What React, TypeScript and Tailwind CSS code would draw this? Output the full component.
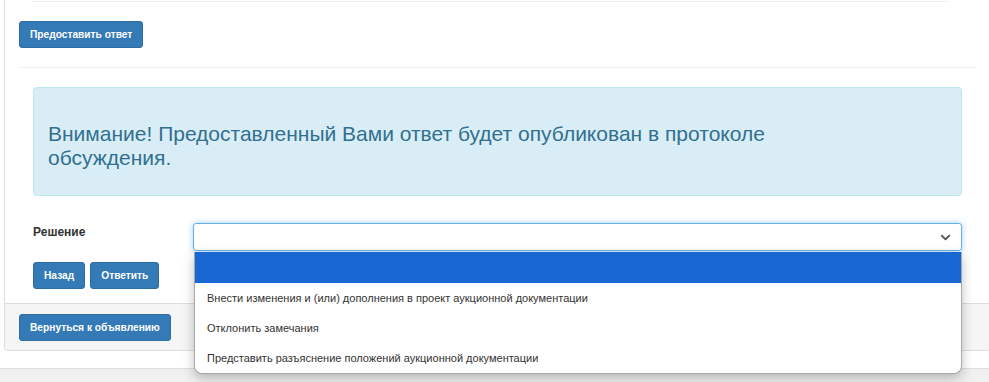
import { ChevronDown } from "lucide-react";

const options = [
  "Внести изменения и (или) дополнения в проект аукционной документации",
  "Отклонить замечания",
  "Представить разъяснение положений аукционной документации",
];

const btn =
  "rounded-[3px] border border-[#2e6da4] bg-[#337ab7] px-[10px] text-[10.2px] font-bold leading-[25px] text-white";

export default function App() {
  return (
    <div className="relative h-[382px] w-[989px] overflow-hidden bg-white font-['Liberation_Sans',Arial,sans-serif] text-[#333]">
      <div className="ml-[4px] w-[987px] rounded-b-[4px] border-x border-b border-[#ddd] bg-white">
        <div className="px-[14px]">
          <div className="mx-[14px] mr-[27px] border-b border-[#eee] pt-px" />
          <div className="pt-[19px]">
            <button className={btn}>Предоставить ответ</button>
          </div>
          <div className="mt-[19px] border-t border-[#eee]" />

          <div className="px-[14px] pt-[19px]">
            <div className="rounded-[4px] border border-[#bce8f1] bg-[#d9edf7] px-[14px] pb-[25px] pt-[34px] text-[#31708f]">
              <h3 className="max-w-[820px] text-[21px] leading-[24px]">
                Внимание! Предоставленный Вами ответ будет опубликован в протоколе обсуждения.
              </h3>
            </div>

            <div className="mt-[27px] flex items-start">
              <label className="w-[160px] pt-[2px] text-[12px] font-bold leading-[14px]">Решение</label>
              <div className="relative flex h-[28px] flex-1 items-center justify-end rounded-[3px] border border-[#66afe9] bg-white pr-[8px] shadow-[0_0_6px_rgba(102,175,233,0.6)]">
                <ChevronDown size={15} strokeWidth={3} className="text-[#555]" />
              </div>
            </div>

            <div className="mt-[11px] flex gap-[5px] pb-[14px]">
              <button className={btn}>Назад</button>
              <button className={btn}>Ответить</button>
            </div>
          </div>
        </div>

        <div className="rounded-b-[3px] border-t border-[#ddd] bg-[#f5f5f5] px-[14px] pb-[9px] pt-[10px]">
          <button className={btn}>Вернуться к объявлению</button>
        </div>
      </div>

      <div className="mt-[17px] h-[20px] border-t border-[#ddd] bg-[#f0f0f0]" />

      <div className="absolute left-[194px] top-[252px] w-[768px] overflow-hidden rounded-b-[8px] border border-t-0 border-[#a8a8a8] bg-white shadow-[0_4px_12px_rgba(0,0,0,0.25)]">
        <div className="h-[31px] bg-[#1967d2]" />
        {options.map((o) => (
          <div key={o} className="h-[30px] px-[12px] text-[11px] leading-[30px] text-[#333]">
            {o}
          </div>
        ))}
      </div>
    </div>
  );
}
